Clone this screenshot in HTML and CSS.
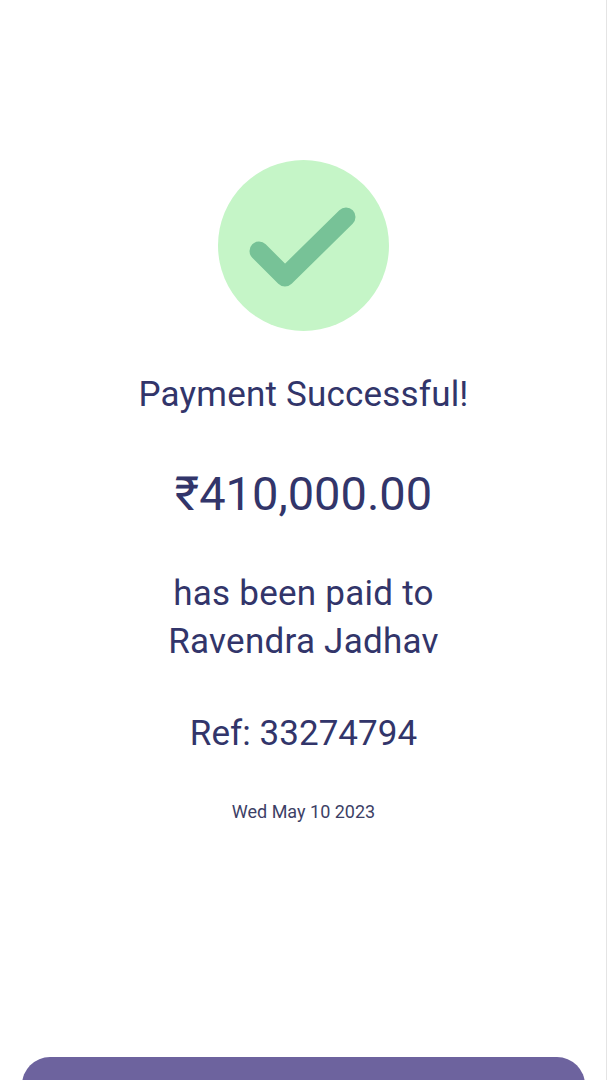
FILE: index.html
```html
<!DOCTYPE html>
<html lang="en">
<head>
  <meta charset="UTF-8">
  <title>Payment Successful</title>
  <link rel="stylesheet" href="styles.css">
</head>
<body>
  <main class="receipt">
    <svg class="success-icon" viewBox="0 0 171 171" aria-hidden="true">
      <circle cx="85.5" cy="85.5" r="85.5" fill="#c5f5c7"/>
      <path d="M41 91 L67 117 L128 57" fill="none" stroke="#77c297" stroke-width="19" stroke-linecap="round" stroke-linejoin="round"/>
    </svg>

    <h1 class="title">Payment Successful!</h1>
    <p class="amount">₹410,000.00</p>
    <p class="payee">has been paid to<br>Ravendra Jadhav</p>
    <p class="ref">Ref: 33274794</p>
    <p class="date">Wed May 10 2023</p>

    <button class="done-btn" type="button"></button>
  </main>
</body>
</html>
```

FILE: styles.css
```css
html, body {
  height: 100%;
}

body {
  margin: 0;
  overflow: hidden;
  background: #fff;
  font-family: Roboto, "Liberation Sans", sans-serif;
  color: #32356a;
}

.receipt {
  display: flex;
  flex-direction: column;
  align-items: center;
  height: 1080px;
  overflow: hidden;
  padding-top: 160px;
  padding-left: 1px;
  box-sizing: border-box;
  border-right: 1px solid #e4e4e4;
  text-align: center;
}

.success-icon {
  width: 171px;
  height: 171px;
  flex: none;
}

.title {
  margin: 44px 0 0;
  font-size: 35px;
  line-height: 40px;
  font-weight: 400;
  letter-spacing: 0.2px;
}

.amount {
  margin: 51px 0 0;
  font-size: 47px;
  line-height: 56px;
}

.payee {
  margin: 48px 0 0;
  font-size: 35px;
  line-height: 48px;
  letter-spacing: 0.25px;
}

.ref {
  margin: 48px 0 0;
  font-size: 35px;
  line-height: 40px;
  letter-spacing: 0.05px;
}

.date {
  margin: 46px 0 0;
  font-size: 18px;
  line-height: 24px;
  color: #3d3f66;
}

.done-btn {
  flex: none;
  width: 563px;
  height: 80px;
  margin-top: 233px;
  border: none;
  border-radius: 28px;
  background-color: #6d639e;
}
```
